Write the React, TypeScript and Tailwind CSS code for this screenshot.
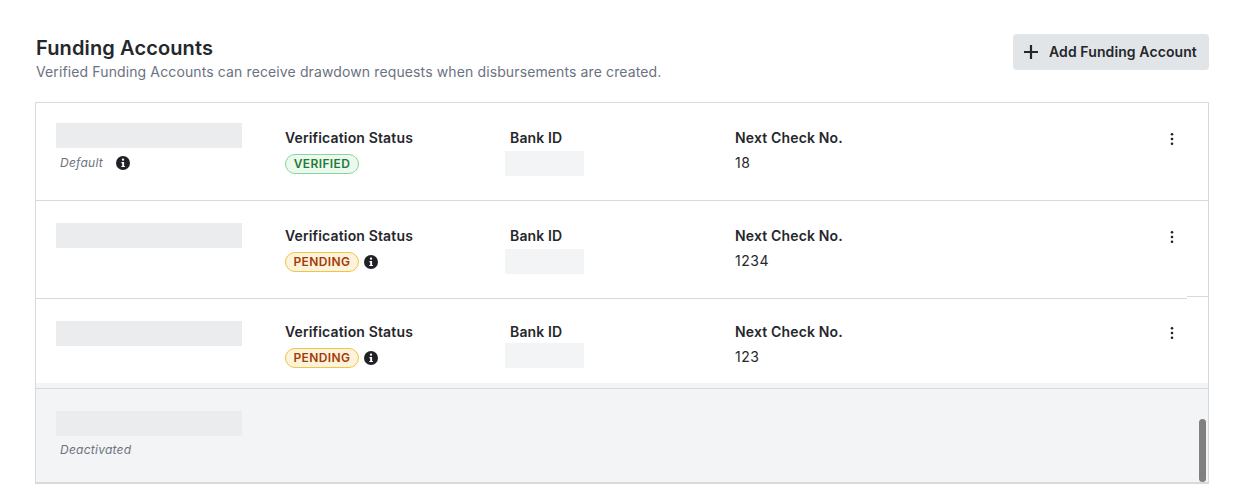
const InfoIcon = () => (
  <svg width="14" height="14" viewBox="0 0 14 14" className="shrink-0">
    <circle cx="7" cy="7" r="7" fill="#1f2125" />
    <rect x="5.9" y="2.6" width="2.2" height="2.2" rx="1" fill="#fff" />
    <path d="M5.4 6h2.7v3.9h.8v1.2H5.3V9.9h.9V7.2h-.8z" fill="#fff" />
  </svg>
);

const Kebab = () => (
  <svg width="4" height="14" viewBox="0 0 4 14">
    <circle cx="2" cy="2.3" r="1.3" fill="#1f2125" />
    <circle cx="2" cy="7" r="1.3" fill="#1f2125" />
    <circle cx="2" cy="11.7" r="1.3" fill="#1f2125" />
  </svg>
);

const PlusIcon = () => (
  <svg width="14" height="14" viewBox="0 0 14 14" className="shrink-0">
    <path d="M5.9 0h2.2v5.9H14v2.2H8.1V14H5.9V8.1H0V5.9h5.9z" fill="#25272b" />
  </svg>
);

const Badge = ({ status }: { status: "VERIFIED" | "PENDING" }) => (
  <span
    className={
      status === "VERIFIED"
        ? "flex h-5 w-[74px] items-center justify-center rounded-full border border-[#86d89a] bg-[#ebf9ee] text-xs font-semibold tracking-[0.4px] text-[#1f7a34]"
        : "flex h-5 w-[74px] items-center justify-center rounded-full border border-[#f2c14e] bg-[#fdf3d8] text-xs font-semibold tracking-[0.4px] text-[#a23b0c]"
    }
  >
    {status}
  </span>
);

const labelClass = "text-sm leading-5 font-semibold tracking-[0.15px] text-[#25272b]";
const valueClass = "mt-[5px] text-sm leading-5 tracking-[0.55px] text-[#25272b]";

type RowProps = {
  status: "VERIFIED" | "PENDING";
  checkNo: string;
  note?: string;
  info?: boolean;
  height: string;
  skeletonTop: string;
  top: string;
  bankGap: string;
  kebabTop: string;
};

const Row = ({ status, checkNo, note, info, height, skeletonTop, top, bankGap, kebabTop }: RowProps) => (
  <div className={`flex pl-5 ${height}`}>
    <div className={`w-[229px] shrink-0 ${skeletonTop}`}>
      <div className="h-[25px] w-[186px] bg-[#ebecee]" />
      {note && (
        <div className="mt-[5px] flex h-[20px] items-center pl-[4px] text-xs italic tracking-[0.25px] text-[#6b7280]">
          {note}
          <span className="ml-[13px]">
            <InfoIcon />
          </span>
        </div>
      )}
    </div>
    <div className={`w-[225px] shrink-0 ${top}`}>
      <div className={labelClass}>Verification Status</div>
      <div className="mt-[6px] flex items-center gap-[5px]">
        <Badge status={status} />
        {info && <InfoIcon />}
      </div>
    </div>
    <div className={`w-[225px] shrink-0 ${top}`}>
      <div className={labelClass}>Bank ID</div>
      <div className={`-ml-[5px] h-[25px] w-[79px] bg-[#f3f4f6] ${bankGap}`} />
    </div>
    <div className={`flex-1 ${top}`}>
      <div className={labelClass}>Next Check No.</div>
      <div className={valueClass}>{checkNo}</div>
    </div>
    <div className={`w-[38px] shrink-0 ${kebabTop}`}>
      <Kebab />
    </div>
  </div>
);

export default function App() {
  return (
    <div className="min-h-[503px] bg-white pt-[34px] pr-[27px] pl-[35px] font-['Inter',sans-serif]">
      <div className="flex items-start justify-between">
        <div className="pl-px">
          <h2 className="text-xl leading-7 font-semibold tracking-[0.12px] text-[#25272b]">Funding Accounts</h2>
          <p className="text-sm leading-5 tracking-[0.12px] text-[#6b7280]">
            Verified Funding Accounts can receive drawdown requests when disbursements are created.
          </p>
        </div>
        <button className="flex h-9 w-[196px] items-center rounded bg-[#e2e5e8] pl-[11px] text-sm font-semibold tracking-[0.1px] text-[#25272b]">
          <PlusIcon />
          <span className="ml-[11px]">Add Funding Account</span>
        </button>
      </div>
      <div className="relative mt-5 h-[382px] overflow-hidden border border-b-2 border-[#d7d9dd]">
        <div className="divide-y divide-[#d7d9dd] border-b border-[#d7d9dd]">
          <Row
            status="VERIFIED"
            checkNo="18"
            note="Default"
            height="h-[98px]"
            skeletonTop="pt-5"
            top="pt-[25px]"
            bankGap="mt-[3px]"
            kebabTop="pt-[29px]"
          />
          <Row
            status="PENDING"
            checkNo="1234"
            info
            height="h-[97px]"
            skeletonTop="pt-[22px]"
            top="pt-[25px]"
            bankGap="mt-[3px]"
            kebabTop="pt-[29px]"
          />
        </div>
        <Row
          status="PENDING"
          checkNo="123"
          info
          height="h-[84px]"
          skeletonTop="pt-[22px]"
          top="pt-[23px]"
          bankGap="mt-px"
          kebabTop="pt-[27px]"
        />
        <div className="h-[5px] bg-[#f3f4f6]" />
        <div className="h-[94px] border-t border-[#d7d9dd] bg-[#f3f4f6] pt-[22px] pl-5">
          <div className="h-[25px] w-[186px] bg-[#ebecee]" />
          <div className="mt-[4px] flex h-5 items-center pl-[4px] text-xs italic tracking-[0.25px] text-[#6b7280]">
            Deactivated
          </div>
        </div>
        <div className="absolute top-[193px] right-0 h-[3px] w-[21px] border-t border-[#d7d9dd] bg-white" />
        {/* overlay scrollbar */}
        <div className="absolute right-[2px] bottom-0 h-[63px] w-[7px] rounded-full bg-[#808080]" />
      </div>
    </div>
  );
}
